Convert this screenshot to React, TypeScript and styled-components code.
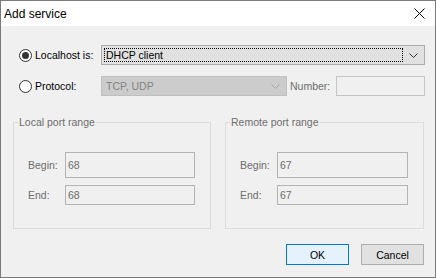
import React from 'react';
import styled, { createGlobalStyle } from 'styled-components';

const GlobalStyle = createGlobalStyle`
  html, body {
    margin: 0;
    padding: 0;
    background: #ffffff;
  }
  * {
    box-sizing: border-box;
  }
`;

const Window = styled.div`
  width: 436px;
  height: 278px;
  border: 1px solid #7a7a7a;
  display: flex;
  flex-direction: column;
  font-family: 'Liberation Sans', Arial, sans-serif;
  font-size: 10.5px;
  color: #000;
`;

const TitleBar = styled.div`
  height: 25px;
  background: #ffffff;
  display: flex;
  align-items: center;
  justify-content: space-between;
  padding: 0 10px 0 3px;
  font-size: 12px;
`;

const Body = styled.div`
  flex: 1;
  background: #f0f0f0;
  padding: 19px 10px 0 12px;
  display: flex;
  flex-direction: column;
`;

const Row = styled.div<{ $gap?: number }>`
  display: flex;
  align-items: center;
  height: 20px;
  margin-top: ${(p) => p.$gap || 0}px;
`;

const RadioOption = styled.label`
  width: 88px;
  display: flex;
  align-items: center;
  gap: 3px;
  padding-left: 6px;
  flex-shrink: 0;
`;

const RadioCircle = styled.span<{ $checked?: boolean }>`
  width: 13px;
  height: 13px;
  border-radius: 50%;
  border: 1px solid #333333;
  background: #ffffff;
  display: flex;
  align-items: center;
  justify-content: center;
  &::after {
    content: '';
    width: 7px;
    height: 7px;
    border-radius: 50%;
    background: ${(p) => (p.$checked ? '#333333' : 'transparent')};
  }
`;

const Combo = styled.div<{ $disabled?: boolean; $width?: number }>`
  height: 20px;
  ${(p) => (p.$width ? `width: ${p.$width}px; flex-shrink: 0;` : 'flex: 1;')}
  background: ${(p) => (p.$disabled ? '#cccccc' : '#e1e1e1')};
  border: 1px solid ${(p) => (p.$disabled ? '#bfbfbf' : '#adadad')};
  color: ${(p) => (p.$disabled ? '#838383' : '#000')};
  display: flex;
  align-items: center;
  padding: 0 6px 0 2px;
`;

const ComboText = styled.span<{ $focused?: boolean }>`
  flex: 1;
  height: 14px;
  display: flex;
  align-items: center;
  padding-left: 1px;
  margin-right: 6px;
  border: 1px ${(p) => (p.$focused ? 'dotted #000' : 'solid transparent')};
`;

const FieldLabel = styled.span<{ $disabled?: boolean }>`
  color: ${(p) => (p.$disabled ? '#6d6d6d' : '#000')};
  white-space: nowrap;
`;

const NumberLabel = styled(FieldLabel)`
  margin: 0 6px 0 3px;
`;

const Edit = styled.div<{ $tall?: boolean }>`
  height: ${(p) => (p.$tall ? 26 : 20)}px;
  flex: 1;
  border: 1px solid #b4b4b4;
  background: #f0f0f0;
  color: #6d6d6d;
  display: flex;
  align-items: center;
  padding-left: 2px;
`;

const NumberEdit = styled(Edit)`
  border-color: #c4c4c4;
`;

const GroupRow = styled.div`
  display: flex;
  gap: 14px;
  margin: 20px 1px 0 0;
`;

const Group = styled.fieldset<{ $width: number }>`
  width: ${(p) => p.$width}px;
  margin: 0;
  border: 1px solid #dcdcdc;
  padding: 23px 15px 23px 14px;
  display: flex;
  flex-direction: column;
  gap: 7px;
`;

const GroupTitle = styled.legend`
  color: #6d6d6d;
  line-height: 13px;
  padding: 0 1px;
  margin-left: -10px;
`;

const PortRow = styled.div`
  display: flex;
  align-items: center;
`;

const PortLabel = styled.span`
  width: 37px;
  color: #6d6d6d;
`;

const ButtonRow = styled.div`
  display: flex;
  justify-content: flex-end;
  gap: 12px;
  margin: 15px 1px 0 0;
`;

const Button = styled.button<{ $primary?: boolean }>`
  width: 63px;
  height: 21px;
  font: inherit;
  color: #000;
  padding: 0;
  border: 1px solid ${(p) => (p.$primary ? '#0078d7' : '#adadad')};
  background: ${(p) => (p.$primary ? '#e5f1fb' : '#e1e1e1')};
`;

const Chevron = ({ color }: { color: string }) => (
  <svg width="9" height="5" viewBox="0 0 9 5">
    <polyline points="0.5,0.5 4.5,4.5 8.5,0.5" fill="none" stroke={color} strokeWidth="1" />
  </svg>
);

const CloseIcon = () => (
  <svg width="11" height="11" viewBox="0 0 11 11">
    <path d="M0.5 0.5 L10.5 10.5 M10.5 0.5 L0.5 10.5" stroke="#000" strokeWidth="1" />
  </svg>
);

const PortGroup = ({ title, value, width }: { title: string; value: string; width: number }) => (
  <Group $width={width}>
    <GroupTitle>{title}</GroupTitle>
    <PortRow>
      <PortLabel>Begin:</PortLabel>
      <Edit $tall>{value}</Edit>
    </PortRow>
    <PortRow>
      <PortLabel>End:</PortLabel>
      <Edit>{value}</Edit>
    </PortRow>
  </Group>
);

const App = () => {
  return (
    <>
      <GlobalStyle />
      <Window>
        <TitleBar>
          <span>Add service</span>
          <CloseIcon />
        </TitleBar>
        <Body>
          <Row>
            <RadioOption>
              <RadioCircle $checked />
              <FieldLabel>Localhost is:</FieldLabel>
            </RadioOption>
            <Combo>
              <ComboText $focused>DHCP client</ComboText>
              <Chevron color="#333" />
            </Combo>
          </Row>
          <Row $gap={11}>
            <RadioOption>
              <RadioCircle />
              <FieldLabel>Protocol:</FieldLabel>
            </RadioOption>
            <Combo $disabled $width={186}>
              <ComboText>TCP, UDP</ComboText>
              <Chevron color="#a8a8a8" />
            </Combo>
            <NumberLabel $disabled>Number:</NumberLabel>
            <NumberEdit />
          </Row>
          <GroupRow>
            <PortGroup title="Local port range" value="68" width={198} />
            <PortGroup title="Remote port range" value="67" width={199} />
          </GroupRow>
          <ButtonRow>
            <Button $primary>OK</Button>
            <Button>Cancel</Button>
          </ButtonRow>
        </Body>
      </Window>
    </>
  );
};

export default App;
